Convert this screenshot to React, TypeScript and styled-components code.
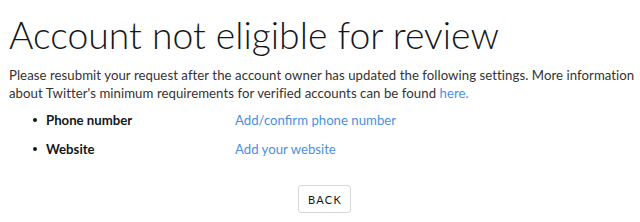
import React from "react";
import styled, { createGlobalStyle } from "styled-components";

const GlobalStyle = createGlobalStyle`
  body {
    margin: 0;
    background: #ffffff;
    font-family: Lato, "Open Sans", sans-serif;
    color: #333333;
  }
`;

const Page = styled.div`
  padding: 13px 0 0 9px;
  display: flex;
  flex-direction: column;
`;

const Title = styled.h1`
  margin: 0;
  font-size: 37.3px;
  font-weight: 300;
  line-height: 44px;
  color: #14171a;
`;

const Intro = styled.p`
  margin: 9px 0 0;
  font-size: 13.2px;
  letter-spacing: 0.06px;
  line-height: 18px;
  color: #333333;
`;

const Link = styled.a`
  color: #4a90e2;
  text-decoration: none;
`;

const Requirements = styled.ul`
  margin: 9px 0 0;
  padding: 0 0 0 24px;
  list-style: none;
  display: flex;
  flex-direction: column;
  gap: 11px;
`;

const Requirement = styled.li`
  display: grid;
  grid-template-columns: 13px 189px 1fr;
  align-items: center;
  font-size: 13.2px;
  line-height: 18px;
`;

const Bullet = styled.span`
  width: 4px;
  height: 4px;
  border-radius: 50%;
  background: #14171a;
`;

const Label = styled.span`
  color: #14171a;
  font-weight: 700;
`;

const Actions = styled.div`
  display: flex;
  justify-content: center;
  margin-top: 27px;
`;

const Button = styled.button`
  height: 28px;
  padding: 0 8px 0 9px;
  background: #ffffff;
  border: 1px solid #d8d8d8;
  border-radius: 3px;
  font-family: inherit;
  font-size: 11px;
  font-weight: 400;
  letter-spacing: 1.3px;
  color: #14171a;
  cursor: pointer;
`;

const items = [
  { label: "Phone number", action: "Add/confirm phone number" },
  { label: "Website", action: "Add your website" },
];

export default function App() {
  return (
    <>
      <GlobalStyle />
      <Page>
        <Title>Account not eligible for review</Title>
        <Intro>
          Please resubmit your request after the account owner has updated the
          following settings. More information about Twitter's minimum
          requirements for verified accounts can be found <Link href="#">here.</Link>
        </Intro>
        <Requirements>
          {items.map((item) => (
            <Requirement key={item.label}>
              <Bullet />
              <Label>{item.label}</Label>
              <Link href="#">{item.action}</Link>
            </Requirement>
          ))}
        </Requirements>
        <Actions>
          <Button>BACK</Button>
        </Actions>
      </Page>
    </>
  );
}
